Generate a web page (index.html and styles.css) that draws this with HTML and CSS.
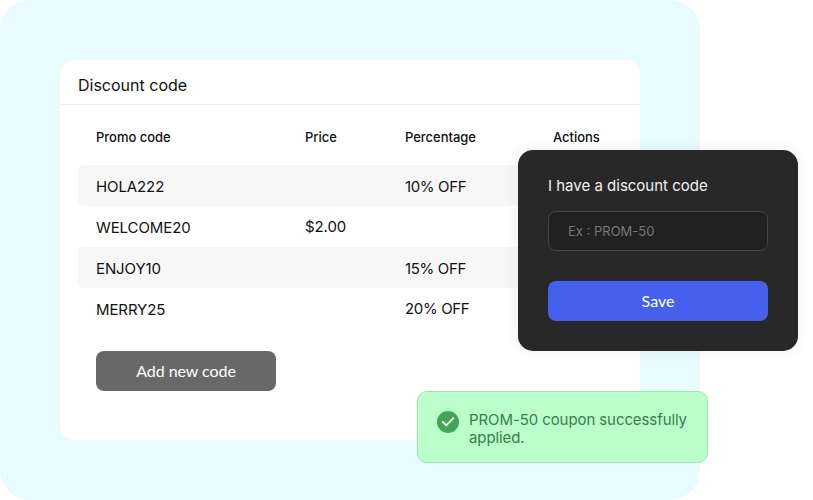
FILE: index.html
```html
<!DOCTYPE html>
<html lang="en">
<head>
  <meta charset="utf-8">
  <title>Discount code</title>
  <link rel="stylesheet" href="styles.css">
</head>
<body>
  <div class="backdrop">
    <div class="card">
      <h1 class="card-title">Discount code</h1>
      <div class="codes">
        <div class="row head">
          <span>Promo code</span>
          <span>Price</span>
          <span>Percentage</span>
          <span>Actions</span>
        </div>
        <div class="row">
          <span>HOLA222</span>
          <span></span>
          <span class="percent">10% OFF</span>
          <span></span>
        </div>
        <div class="row">
          <span>WELCOME20</span>
          <span class="raised">$2.00</span>
          <span></span>
          <span></span>
        </div>
        <div class="row">
          <span>ENJOY10</span>
          <span></span>
          <span class="percent">15% OFF</span>
          <span></span>
        </div>
        <div class="row">
          <span>MERRY25</span>
          <span></span>
          <span class="percent raised">20% OFF</span>
          <span></span>
        </div>
      </div>
      <button class="btn btn-add">Add new code</button>
    </div>
  </div>

  <div class="popup">
    <label class="popup-title" for="coupon">I have a discount code</label>
    <input class="popup-input" id="coupon" type="text" placeholder="Ex : PROM-50">
    <button class="btn btn-save">Save</button>
  </div>

  <div class="toast">
    <svg class="toast-icon" viewBox="0 0 22 22" width="22" height="22">
      <circle cx="11" cy="11" r="11" fill="#45a35a"/>
      <path d="M5.8 11l3.5 3.4 7-7.2" fill="none" stroke="#fff" stroke-width="1.8" stroke-linecap="round" stroke-linejoin="round"/>
    </svg>
    <p class="toast-text">PROM-50 coupon successfully applied.</p>
  </div>
</body>
</html>
```
FILE: styles.css
```css
* {
  margin: 0;
  padding: 0;
  box-sizing: border-box;
}

body {
  position: relative;
  width: 813px;
  height: 500px;
  overflow: hidden;
  background: #fff;
  color: #111;
  font-family: Inter, sans-serif;
}

.backdrop {
  width: 700px;
  height: 500px;
  padding: 60px;
  border-radius: 30px;
  background: #e8fcff;
}

.card {
  height: 380px;
  border-radius: 15px;
  background: #fff;
}

.card-title {
  height: 45px;
  padding: 6px 18px 0;
  border-bottom: 1px solid #eee;
  font-size: 16px;
  font-weight: 400;
  line-height: 39px;
}

.codes {
  padding: 0 18px;
}

.row {
  display: grid;
  grid-template-columns: 209px 100px 148px 1fr;
  height: 41px;
  padding-left: 18px;
  border-radius: 5px;
  font-size: 15px;
  letter-spacing: -0.1px;
  line-height: 44px;
}

.row:nth-child(even) {
  background: #f7f7f7;
}

.head {
  height: 60px;
  font-size: 13px;
  font-weight: 500;
  letter-spacing: -0.03px;
  line-height: 64px;
}

.percent {
  letter-spacing: -0.35px;
}

.raised {
  line-height: 42px;
}

.btn {
  display: block;
  height: 40px;
  padding-bottom: 1px;
  border: none;
  border-radius: 8px;
  color: #fff;
  font-family: Lato, sans-serif;
  font-size: 16px;
}

.btn-add {
  width: 180px;
  margin: 22px 0 0 36px;
  background: #686868;
  letter-spacing: -0.05px;
}

.popup {
  position: absolute;
  left: 518px;
  top: 150px;
  width: 280px;
  height: 201px;
  padding: 26px 30px 30px;
  border-radius: 15px;
  background: #282828;
  box-shadow: 0 0 15px rgba(0, 0, 0, 0.07);
}

.popup-title {
  display: block;
  height: 35px;
  color: #f2f2f2;
  font-size: 15px;
  line-height: 20px;
}

.popup-input {
  display: block;
  width: 100%;
  height: 40px;
  padding: 0 19px;
  border: 1px solid #444;
  border-radius: 8px;
  background: #212121;
  color: #fff;
  font-family: inherit;
  font-size: 13px;
}

.popup-input::placeholder {
  color: #777;
}

.btn-save {
  width: 100%;
  margin-top: 30px;
  background: #4560ec;
}

.toast {
  position: absolute;
  left: 417px;
  top: 391px;
  display: flex;
  gap: 10px;
  width: 291px;
  height: 72px;
  padding: 19px 15px 0 19px;
  border: 1px solid #a0e3ae;
  border-radius: 10px;
  background: #bbffca;
}

.toast-icon {
  flex: none;
}

.toast-text {
  color: #37804a;
  font-size: 15px;
  letter-spacing: -0.09px;
  line-height: 18px;
}
```
